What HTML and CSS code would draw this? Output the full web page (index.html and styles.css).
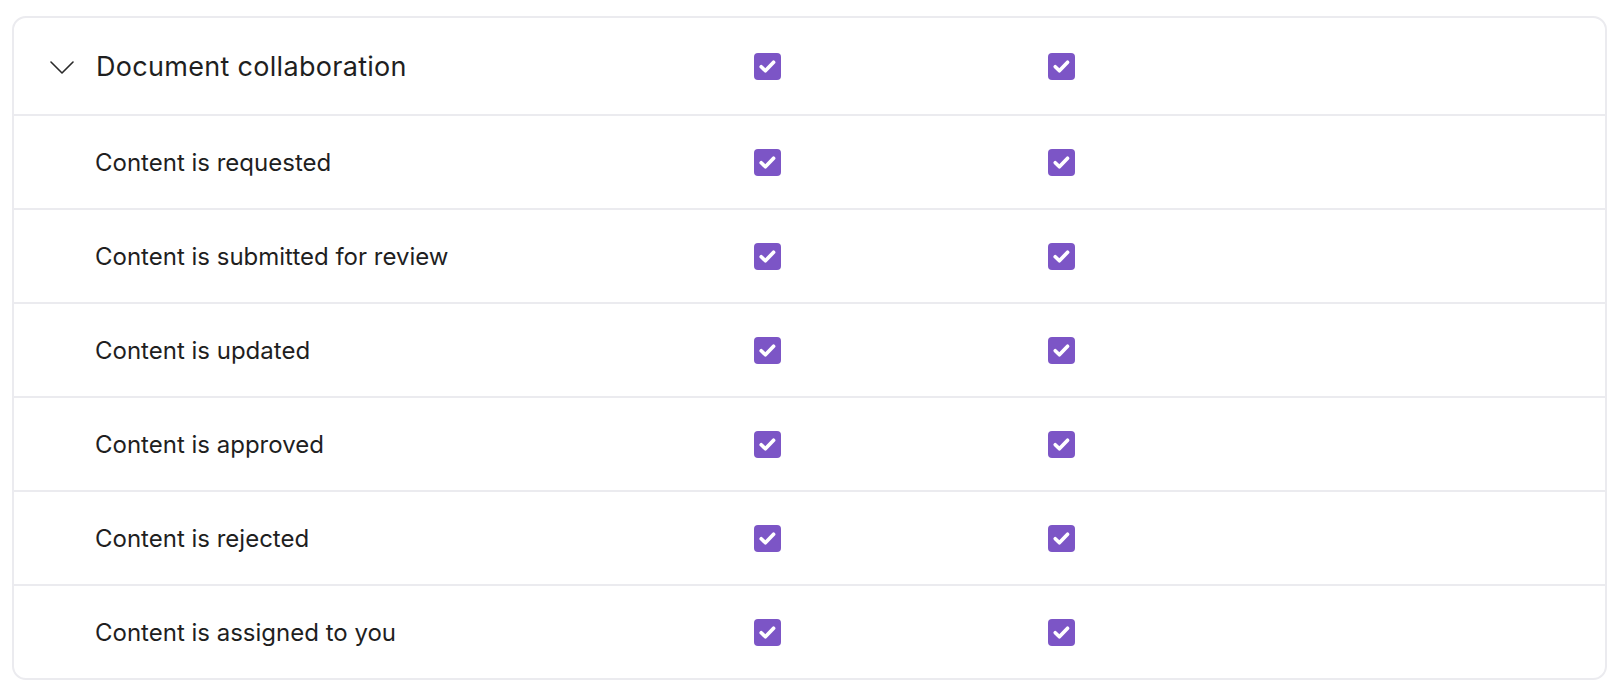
FILE: index.html
```html
<!DOCTYPE html>
<html lang="en">
<head>
<meta charset="utf-8">
<title>Document collaboration</title>
<link rel="stylesheet" href="styles.css">
</head>
<body>
<div class="card">
  <div class="row header">
    <div class="label">
      <svg class="chevron" width="24" height="13" viewBox="0 0 24 13"><path d="M1 1 L12 12 L23 1" fill="none" stroke="#2a2a2a" stroke-width="1.6" stroke-linecap="round" stroke-linejoin="round"/></svg>
      <span class="title">Document collaboration</span>
    </div>
    <div class="cell"><span class="cb"><svg viewBox="0 0 28 28"><path d="M7.5 14.3 L11.8 18.4 L20.3 9.6" fill="none" stroke="#fff" stroke-width="3.8" stroke-linecap="round" stroke-linejoin="round"/></svg></span></div>
    <div class="cell"><span class="cb"><svg viewBox="0 0 28 28"><path d="M7.5 14.3 L11.8 18.4 L20.3 9.6" fill="none" stroke="#fff" stroke-width="3.8" stroke-linecap="round" stroke-linejoin="round"/></svg></span></div>
  </div>
  <div class="row">
    <div class="label sub">Content is requested</div>
    <div class="cell"><span class="cb"><svg viewBox="0 0 28 28"><path d="M7.5 14.3 L11.8 18.4 L20.3 9.6" fill="none" stroke="#fff" stroke-width="3.8" stroke-linecap="round" stroke-linejoin="round"/></svg></span></div>
    <div class="cell"><span class="cb"><svg viewBox="0 0 28 28"><path d="M7.5 14.3 L11.8 18.4 L20.3 9.6" fill="none" stroke="#fff" stroke-width="3.8" stroke-linecap="round" stroke-linejoin="round"/></svg></span></div>
  </div>
  <div class="row">
    <div class="label sub">Content is submitted for review</div>
    <div class="cell"><span class="cb"><svg viewBox="0 0 28 28"><path d="M7.5 14.3 L11.8 18.4 L20.3 9.6" fill="none" stroke="#fff" stroke-width="3.8" stroke-linecap="round" stroke-linejoin="round"/></svg></span></div>
    <div class="cell"><span class="cb"><svg viewBox="0 0 28 28"><path d="M7.5 14.3 L11.8 18.4 L20.3 9.6" fill="none" stroke="#fff" stroke-width="3.8" stroke-linecap="round" stroke-linejoin="round"/></svg></span></div>
  </div>
  <div class="row">
    <div class="label sub">Content is updated</div>
    <div class="cell"><span class="cb"><svg viewBox="0 0 28 28"><path d="M7.5 14.3 L11.8 18.4 L20.3 9.6" fill="none" stroke="#fff" stroke-width="3.8" stroke-linecap="round" stroke-linejoin="round"/></svg></span></div>
    <div class="cell"><span class="cb"><svg viewBox="0 0 28 28"><path d="M7.5 14.3 L11.8 18.4 L20.3 9.6" fill="none" stroke="#fff" stroke-width="3.8" stroke-linecap="round" stroke-linejoin="round"/></svg></span></div>
  </div>
  <div class="row">
    <div class="label sub">Content is approved</div>
    <div class="cell"><span class="cb"><svg viewBox="0 0 28 28"><path d="M7.5 14.3 L11.8 18.4 L20.3 9.6" fill="none" stroke="#fff" stroke-width="3.8" stroke-linecap="round" stroke-linejoin="round"/></svg></span></div>
    <div class="cell"><span class="cb"><svg viewBox="0 0 28 28"><path d="M7.5 14.3 L11.8 18.4 L20.3 9.6" fill="none" stroke="#fff" stroke-width="3.8" stroke-linecap="round" stroke-linejoin="round"/></svg></span></div>
  </div>
  <div class="row">
    <div class="label sub">Content is rejected</div>
    <div class="cell"><span class="cb"><svg viewBox="0 0 28 28"><path d="M7.5 14.3 L11.8 18.4 L20.3 9.6" fill="none" stroke="#fff" stroke-width="3.8" stroke-linecap="round" stroke-linejoin="round"/></svg></span></div>
    <div class="cell"><span class="cb"><svg viewBox="0 0 28 28"><path d="M7.5 14.3 L11.8 18.4 L20.3 9.6" fill="none" stroke="#fff" stroke-width="3.8" stroke-linecap="round" stroke-linejoin="round"/></svg></span></div>
  </div>
  <div class="row">
    <div class="label sub">Content is assigned to you</div>
    <div class="cell"><span class="cb"><svg viewBox="0 0 28 28"><path d="M7.5 14.3 L11.8 18.4 L20.3 9.6" fill="none" stroke="#fff" stroke-width="3.8" stroke-linecap="round" stroke-linejoin="round"/></svg></span></div>
    <div class="cell"><span class="cb"><svg viewBox="0 0 28 28"><path d="M7.5 14.3 L11.8 18.4 L20.3 9.6" fill="none" stroke="#fff" stroke-width="3.8" stroke-linecap="round" stroke-linejoin="round"/></svg></span></div>
  </div>
</div>
</body>
</html>
```

FILE: styles.css
```css
html, body {
  margin: 0;
  padding: 0;
  background: #ffffff;
}
body {
  font-family: Inter, "Noto Sans", "Liberation Sans", sans-serif;
  color: #1f1f1f;
  padding: 16px 15px 0 12px;
}
.card {
  border: 2px solid #ebebef;
  border-radius: 14px;
  overflow: hidden;
  background: #fff;
}
.row {
  display: grid;
  grid-template-columns: 740px 294px 1fr;
  align-items: center;
  height: 92px;
  border-top: 2px solid #ebebef;
}
.row.header {
  height: 96px;
  border-top: none;
}
.label {
  display: flex;
  align-items: center;
  padding-left: 36px;
}
.label.sub {
  padding-left: 81px;
  font-size: 24px;
}
.chevron {
  display: block;
  margin-right: 22px;
  margin-top: 3px;
}
.title {
  font-size: 27px;
  font-weight: 400;
  letter-spacing: 0.3px;
}
.cell {
  display: flex;
  align-items: center;
}
.cb {
  display: block;
  width: 27px;
  height: 27px;
  border-radius: 4px;
  background: #7c55c6;
}
.cb svg {
  display: block;
  width: 27px;
  height: 27px;
}
```
